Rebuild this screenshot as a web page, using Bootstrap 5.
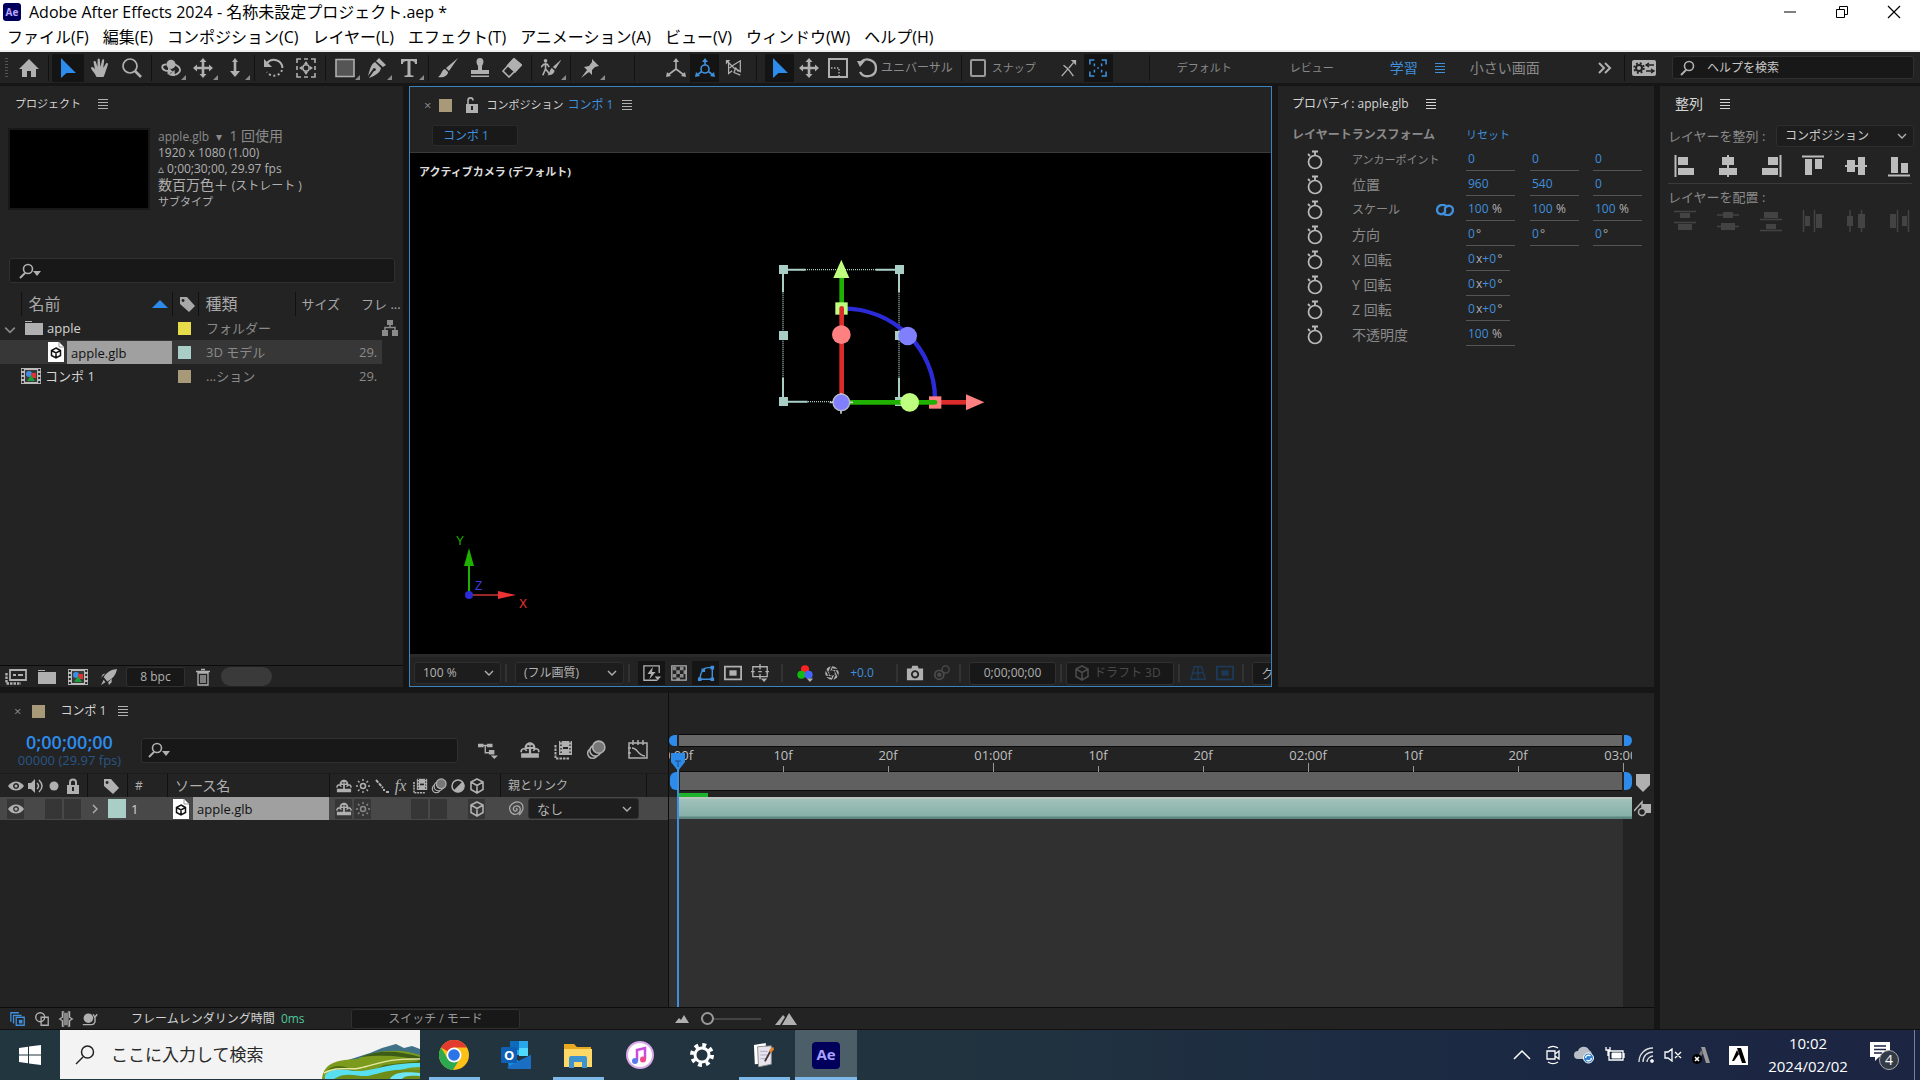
<!DOCTYPE html>
<html lang="ja">
<head>
<meta charset="utf-8">
<meta name="viewport" content="width=device-width, initial-scale=1">
<title>Adobe After Effects 2024</title>
<link href="https://cdn.jsdelivr.net/npm/bootstrap@5.3.0/dist/css/bootstrap.min.css" rel="stylesheet">
<style>
:root{--pane:#232323;--gap:#161616;--well:#181818;--txt:#b0b0b0;--dim:#8a8a8a;--hot:#3f8fdc;--edge:#303030}
body{font:12px/16px "Open Sans","Noto Sans CJK JP",sans-serif;color:var(--txt);background:var(--gap);min-height:100vh;overflow:hidden}
button,input,select{font:inherit;color:inherit}
a{color:inherit;text-decoration:none}
.f11{font-size:11px}.f12{font-size:12px}.f13{font-size:13px}.f14{font-size:14px}.f16{font-size:16px}
.hot,.tool.hot,.vb.hot,.tfb.hot{color:var(--hot)}.dim{color:var(--dim)}.lite{color:#d4d4d4}
.ic{width:20px;height:20px;flex:none;fill:none;stroke:currentColor;stroke-width:2;overflow:visible}
.ic10{width:10px;height:10px}.ic12{width:12px;height:12px;vertical-align:middle}.ic16{width:16px;height:16px}.ic18{width:18px;height:18px}.ic24{width:24px;height:24px}
.icw{width:22px;height:16px}.icset{width:24px;height:16px}.icfile{width:16px}.icsrch{height:16px}.iclink{width:18px;height:12px}
.flipx{transform:scaleX(-1)}.flipy{transform:scaleY(-1)}.turn{transform:rotate(90deg)}.unturn{transform:rotate(-90deg)}
.ib{background:none;border:0;padding:0;display:inline-flex;align-items:center;justify-content:center;flex:none;position:relative}
.pane{background:var(--pane);min-width:0;min-height:0;overflow:hidden}
/* window chrome */
.titlebar{height:24px;background:#fff;color:#000;font-size:16px;padding-left:3px}
.winbtn{width:52px;height:24px;color:#000}
.menus{height:28px;background:#fff;color:#000;border-bottom:2px solid #eee;font-size:16px;padding-left:7px;gap:14px}
.aelogo{width:18px;height:18px;border-radius:3px;background:#00005b;color:#b9a6ff;font-size:10px;line-height:18px;font-weight:700;text-align:center}
/* tool strip */
.tools{height:31px;background:var(--pane)}
.tool{width:32px;height:28px;color:#b0b0b0}
.tool.mini{width:29px}
.tool.on{background:#141414;color:var(--hot)}
.more::after{content:"";position:absolute;right:1px;bottom:2px;border-left:5px solid transparent;border-bottom:5px solid #8a8a8a}
.bar{width:1px;height:26px;background:#121212;margin:0 3px;flex:none}
.bar.axbar{margin:0 26px 0 28px}
.bar.wsbar{margin:0 27px 0 36px}
.grip{width:3px;height:20px;margin:0 5px;background:repeating-linear-gradient(#555 0 1px,transparent 1px 3px)}
.ws{color:var(--dim)}
.snapbox{appearance:none;width:16px;height:18px;border:2px solid #999;border-radius:2px}
.snaptext{margin-left:2px}
.wsnav>a:nth-child(2){margin-left:58px}.wsnav>a:nth-child(3){margin-left:56px}.wsnav>a:nth-child(4){margin-left:24px}
.hsearch{width:242px;height:23px;margin:0 6px 0 12px;padding-left:6px}
.field{background:var(--well);border:1px solid var(--edge);border-radius:3px}
.field input{background:none;border:0;outline:0;padding:0;min-width:0;width:100%}
.field input::placeholder{color:#c8c8c8;opacity:1}
.drop{width:8px;height:5px;fill:#b0b0b0;margin:6px 0 0 -5px;flex:none}
/* panels */
.workarea{display:grid;grid-template-columns:minmax(0,403fr) minmax(0,863fr) minmax(0,376fr) minmax(0,260fr);grid-template-rows:minmax(0,601fr) minmax(0,336fr);gap:6px;margin-top:3px;flex:1 1 0;min-height:0}
.phead{height:36px;flex:none;padding-left:15px}
.phead.inner{padding-left:14px}
.swatch{display:inline-block;width:13px;height:13px;flex:none}
.tan{background:#a89a78}.mint{background:#a8cec6}.yel{background:#e6dc4a}
.selbox{position:relative;display:inline-flex}
.selbox svg{position:absolute;right:7px;top:6px;pointer-events:none}
.fsel{appearance:none;background:#1d1d1d;border:1px solid #2e2e2e;border-radius:3px;height:22px;padding:0 8px;outline:0;color:#b4b4b4}
/* project */
.thumb{width:142px;height:82px;background:#000;border:2px solid #181818;flex:none}
.pinfo{padding:6px 0 0 8px}
.psearch{height:25px;margin:48px 8px 9px 9px;padding-left:8px}
.ptable{table-layout:fixed;width:100%;border-collapse:collapse;color:var(--dim);line-height:20px}
.ptable th{font-weight:400;font-size:16px;height:24px;padding:0 0 0 7px;border-left:1px solid #111;color:#a8a8a8;white-space:nowrap;overflow:hidden}
.ptable th.small13{font-size:13px;padding-left:6px}
.ptable th:first-child,.ptable th:last-child{border:0}
.ptable td{height:24px;padding:0 0 0 8px;white-space:nowrap;overflow:hidden;font-size:13px}
.ptable .sw{padding-left:6px}
.ptable tr.sel td:not(:last-child){background:#373737}
.cw21{width:21px}.cw26{width:26px}.cw97{width:97px}.cw60{width:60px}.cw27{width:27px}
.nm{padding-left:27px;gap:3px}
.pick{background:#a0a0a0;color:#111;height:23px;line-height:24px}
.pfoot{height:22px;border-top:1px solid #0c0c0c;flex:none;color:#b0b0b0}
.pbtn{width:31px;height:20px}
.pbtn.bin{margin-left:-6px}
.bpc{width:59px;height:20px;margin:0 2px}
.pill{width:51px;height:19px;border-radius:10px;background:#3a3a3a;margin-left:3px}
/* viewer */
.viewer{border:1px solid #3f83bd}
.vlock{margin:0 6px 0 12px}
.vtabs{height:29px;padding:2px 0 0 22px;flex:none}
.ctab{width:86px;height:21px;background:#191919;border:1px solid #2a2a2a;border-radius:2px;justify-content:flex-start;padding-left:10px}
.stage{background:#000;position:relative;flex:1 1 0;border-top:1px solid #3a3a3a}
.cam{padding:11px 0 0 9px;font-size:11px;font-weight:700;color:#dedede}
.gizmo{position:absolute;left:331px;top:86px;width:280px;height:190px}
.axes{position:absolute;left:43px;bottom:41px;width:80px;height:80px}
.vfoot{height:32px;flex:none;border-top:3px solid #2a2a2a;padding:3px 0 0 4px;overflow:hidden}
.vfoot .bar{background:#333;height:18px;width:2px}
.vb{width:27px;height:24px;color:#b0b0b0}
.vb.on{background:#151515}
.vb.off,.off{color:#4a4a4a}.vb.offb{color:#1c3a58}
.zoomsel{width:87px}.ressel{width:109px}
.exp{width:34px;margin-right:14px}
.tcb{width:87px;height:23px;margin-left:4px}
.draft{width:108px;height:23px;justify-content:flex-start;padding-left:7px}
.qbox{width:60px;height:23px;justify-content:flex-start;padding-left:8px;margin-left:4px}
/* properties */
.prow{height:25px;display:grid;grid-template-columns:60px 84px 30px 64px 63px 63px;padding-left:14px;align-items:center;white-space:nowrap}
.prow .wide{grid-column:1/4}
.watch{width:16px;margin-left:15px;color:#bbb}
.val{width:49px;height:22px;border-bottom:1px solid #555;display:flex;align-items:center;padding-left:2px}
.val.rot{width:44px}
.val input{background:none;border:0;outline:0;padding:0;color:var(--hot);width:8px;min-width:0}
.val input.n2{width:15px}.val input.n3{width:24px}
/* align */
.alrow{height:28px;margin-right:-2px}
.alignsel{width:138px;color:#ccc}
.algrid{display:grid;grid-template-columns:repeat(6,1fr);justify-items:center;margin:0 -8px 0 -4px}
.albtn{height:32px;color:#bcbcbc}
.alsep{height:1px;background:#3a3a3a;margin-top:1px}
.distlabel{padding-top:5px;height:25px}
.dis{color:#434343}
/* timeline */
.tl{grid-column:1/4}
.tlleft{width:668px;flex:none}
.tlhead{gap:3px}
.tltop{height:44px;padding-bottom:2px}
.tcw{width:139px;margin-right:2px}
.sub{color:#285684}
.timecode{color:#2d8ceb;font-size:18px;line-height:20px;font-weight:600}
.tlsearch{width:317px;height:25px;padding-left:5px}
.tlb{width:33px;height:24px;color:#b0b0b0}
.tlb.first{margin:0 9px 0 13px}.tlb.last{margin-left:9px}
.trow{display:grid;grid-template-columns:87px 40px 40px minmax(0,1fr) 171px 146px 22px;align-items:stretch}
.trow>div{display:flex;align-items:center;min-width:0}
.trow.heads{height:24px;color:#b0b0b0;border-top:1px solid #1c1c1c}
.trow.heads>div+div{box-shadow:inset 1px 0 #111}
.trow.layer{height:23px;background:#484848}
.trow .avcol{padding-left:6px}.trow .swcol{padding-left:5px}
.trow .srccol{padding-left:6px;gap:4px}
.cell{width:19px;height:20px;display:inline-flex;align-items:center;justify-content:center;flex:none}
.cell.k{background:#363636;background-clip:content-box;padding:0 1px}
.fxs{font-family:"Liberation Serif",serif}
.lsw{width:18px;height:19px;margin-right:1px;flex:none}
.psel{width:111px;height:21px;background:#1e1e1e}
.tracks{flex:1 1 0;min-width:0;position:relative;border-left:1px solid #0d0d0d}
.hnd{background:#2d8ceb;width:8px;flex:none}
.hnd.l{border-radius:6px 0 0 6px}.hnd.r{border-radius:0 6px 6px 0}
.rowbars{display:flex;gap:2px}
.rowbars .mid{flex:1 1 0;background:#686868;box-shadow:0 1px #0b0b0b,0 -1px #0b0b0b}
.nav1{height:11px;margin-top:42px}
.nav2{height:18px;padding-left:1px}
.nav2 .mid{background:#606060}
.ruler{height:26px;position:relative;overflow:hidden;font-size:13px;line-height:19px;color:#c0c0c0}
.ruler .in{position:absolute;left:9px;right:8px;top:0;bottom:0}
.tick{position:absolute;bottom:0;width:60px;margin-left:-30px;height:26px;text-align:center}
.tick::after{content:"";position:absolute;left:30px;bottom:0;width:1px;height:6px;background:#999}
.tick.s::after{height:9px}
.cache{height:7px;padding:3px 0 0 9px}.cache i{display:block;width:30px;height:4px;background:#1db32c}
.cliprow{height:22px;background:#484848}
.clip{height:22px;margin-left:9px;background:linear-gradient(#bcc4c2 0 2px,#a0c2bb 2px,#86b0a8 19px,#5f8780 20px)}
.void{flex:1 1 0;background:#303030;margin:0 9px 0 0}
.playhead{position:absolute;left:2px;top:60px;bottom:0;width:15px}
.playhead::after{content:"";position:absolute;left:6px;top:14px;bottom:0;width:2px;background:#3f8fdc}
.gutter{width:22px;flex:none;padding-top:81px;color:#b0b0b0}
.tfoot{height:22px;flex:none;border-top:1px solid #0c0c0c;padding-left:6px}
.tfb{width:24px;height:20px;color:#b0b0b0}
.rt{width:220px;margin-left:29px;white-space:nowrap}
.ms{color:#4ec79a}
.swm{width:169px;height:20px;margin-right:155px;color:#999}
.zoomer{width:60px;height:12px;appearance:none;background:linear-gradient(#444,#444) center/100% 2px no-repeat;margin:0 14px 0 12px}
.zoomer::-webkit-slider-thumb{appearance:none;width:13px;height:13px;border-radius:50%;border:2px solid #999;background:#232323}
.mt1{width:14px;height:8px}.mt2{width:22px;height:12px}
/* task bar */
.taskbar{height:51px;border-top:1px solid #111;background:linear-gradient(90deg,#22363f 0,#21333f 50%,#1b2843 80%,#1c2542 100%);color:#fff}
.start{width:60px}
.tsearch{width:360px;height:49px;background:#f3f3f3;color:#222;font-size:17px;overflow:hidden}
.tsearch .glass{margin:0 16px 0 15px;stroke-width:1.5}
.tsearch input{border:0;background:none;outline:0;width:209px;padding:0}
.tsearch input::placeholder{color:#2a2a2a;opacity:1}
.apps{margin-left:3px}
.app{width:62px;height:50px}
.app.run::after{content:"";position:absolute;left:6px;right:5px;bottom:0;height:3px;background:#7db8e8}
.app.cur{background:#4c5e68}
.app.cur::after{left:0;right:0}
.tray{width:31px;height:50px}
.tray.narrow{width:25px}.tray.ime{width:42px}
.aebig{width:28px;height:27px;border-radius:4px;background:#00005b;color:#a9a0ff;font-weight:700;font-size:15px;line-height:25px}
.clock{width:98px;font-size:15px;line-height:23px;text-align:center}
.note{width:54px;margin:0 5px 0 4px;padding-right:8px;border-right:1px solid #7a8294}
</style>
<script src="https://cdn.jsdelivr.net/npm/bootstrap@5.3.0/dist/js/bootstrap.bundle.min.js"></script>
</head>
<body class="d-flex flex-column">
<svg width="0" height="0" class="position-absolute" aria-hidden="true"><defs>
<symbol id="home" viewBox="0 0 20 20"><path d="M0 11 10 1l10 10h-3v8h-5v-6H8v6H3v-8z" fill="currentColor" stroke="none"/></symbol>
<symbol id="arrow" viewBox="0 0 20 20"><path d="M3 0v20l5.500-5H18z" fill="#2d8ceb" stroke="none"/></symbol>
<symbol id="hand" viewBox="0 0 20 20"><path d="M6 18C5 15 1 12 1 9.500c1-1.200 3-.2 4 2L3.500 4c0-1.500 2-1.500 2.400 0L7.500 9 7.600 1.500c.2-1.500 2-1.500 2.200 0L10.400 9l1.700-7c.5-1.300 2.200-1 2.100.5L13.200 10l2.800-4.500c.9-1 2.300-.2 1.900 1C16.500 11 15 16 13.500 19h-7z" fill="currentColor" stroke="none"/></symbol>
<symbol id="mag" viewBox="0 0 20 20"><circle cx="8" cy="8" r="7" stroke-width="1.700"/><path d="m13 13 6 6" stroke-width="2.600"/></symbol>
<symbol id="srch" viewBox="0 0 20 16"><circle cx="10" cy="6" r="4.500" stroke-width="1.600"/><path d="m7 10-5 5" stroke-width="2"/></symbol>
<symbol id="orbit" viewBox="0 0 22 20"><circle cx="11" cy="6" r="5" fill="currentColor" stroke="none"/><path d="M6 6C0 6 0 11 5 13l4 .5M15 6c7 3 8 8 2 11-4 1-7 0-9-1" stroke-width="2"/><path d="m8 9 5 5-6 3zM15 12v7l-6-1z" fill="currentColor" stroke="none"/></symbol>
<symbol id="pan" viewBox="0 0 20 20"><path d="M10 2v16M2 10h16" stroke-width="2.600"/><path d="m10 0 3.500 4h-7zM10 20l3.500-4h-7zM0 10l4-3.500v7zM20 10l-4-3.500v7z" fill="currentColor" stroke="none"/></symbol>
<symbol id="dolly" viewBox="0 0 20 20"><path d="M10 3v11" stroke-width="2.600"/><path d="m10 0 3 4H7zM10 19l5-6H5z" fill="currentColor" stroke="none"/></symbol>
<symbol id="rot" viewBox="0 0 20 20"><path d="M3 5C8-1 18 2 18.500 10" /><path d="M18 12A8.500 8.500 0 0 1 3 14" stroke-dasharray="2 2.500"/><path d="M0 1v8h8z" fill="currentColor" stroke="none"/></symbol>
<symbol id="anchor" viewBox="0 0 20 20"><path d="M1 5V1h4M15 1h4v4M19 15v4h-4M5 19H1v-4M8 1h4M8 19h4M1 8v4M19 8v4" stroke-width="1.600"/><circle cx="10" cy="10" r="3.200" stroke-width="1.500"/><path d="m10 3 2 3H8zM10 17l2-3H8zM3 10l3-2v4zM17 10l-3-2v4z" fill="currentColor" stroke="none"/></symbol>
<symbol id="rect" viewBox="0 0 20 20"><path d="M1 1.500h18v17H1z" fill="#555" stroke-width="1.600"/></symbol>
<symbol id="pen" viewBox="0 0 20 20"><path d="m12 0 7 7-3 2-7-6zM8 4l6 6c-1 5-5 7-12 10l5-7 1 0a1.500 1.500 0 1 0-2-2l-5 7C3 11 4 6 8 4" fill="currentColor" stroke="none"/></symbol>
<symbol id="type" viewBox="0 0 20 20"><path d="M2 1h16v5h-2c0-2-1-3-4.500-3v13c0 1 .5 1.500 3 1.500V19h-9v-1.500c2.500 0 3-.5 3-1.500V3C5 3 4 4 4 6H2z" fill="currentColor" stroke="none"/></symbol>
<symbol id="brush" viewBox="0 0 20 20"><path d="M20 0 11 13 8 10zM7 11l3 3c0 4-5 6-10 5 4-2 3-7 7-8" fill="currentColor" stroke="none"/></symbol>
<symbol id="stamp" viewBox="0 0 20 20"><path d="M8 8C5 3 7 0 10 0s5 3 2 8v4h7v4H1v-4h7zM1 17.500h18V19H1z" fill="currentColor" stroke="none"/></symbol>
<symbol id="eraser" viewBox="0 0 20 20"><path d="M12 1 1 13l6 6L19 7z" stroke-width="1.600"/><path d="m12 1-6 6.500 7 6L19 7z" fill="currentColor"/></symbol>
<symbol id="roto" viewBox="0 0 22 20"><circle cx="5" cy="2" r="2" fill="currentColor" stroke="none"/><path d="M5 4v7l-3 7M5 11l4 5M0 9l3-3h4l2 3" stroke-width="1.800"/><path d="M23 0 16 11l-3-2zM12 10l3 3c-1 4-4 5-8 5 3-2 2-6 5-8" fill="currentColor" stroke="none"/></symbol>
<symbol id="pin" viewBox="0 0 20 20"><path d="m12 1 7 7-4 1-3 3v5L4 9l5-1 3-4zM7 12l2 2-8 6z" fill="currentColor" stroke="none"/></symbol>
<symbol id="ax" viewBox="0 0 20 20"><path d="M10 3v8l-8 6M10 11l8 6" stroke-width="1.600"/><path d="m10 0 3 4H7zM0 19l1-5 4 4zM20 19l-1-5-4 4z" fill="currentColor" stroke="none"/></symbol>
<symbol id="axw" viewBox="0 0 20 20"><use href="#ax"/><circle cx="10" cy="11" r="4" fill="#141414" stroke-width="1.600"/></symbol>
<symbol id="axv" viewBox="0 0 20 20"><path d="M4 4v12l4-3M9 7l8-5v12l-3-2M3 3l9 9M17 18l-7-3 2-5 3 4M5 10l4-3" stroke-width="1.400"/><path d="M1 1h5L1 6z" fill="currentColor" stroke="none"/></symbol>
<symbol id="scale" viewBox="0 0 20 20"><path d="M1 1h18v18H1z"/><path d="M3 10h8v8" stroke-width="1.500" stroke-dasharray="1.500 1.500"/></symbol>
<symbol id="undo" viewBox="0 0 20 20"><path d="M4 4c5-5 15-2 15 6 0 9-12 11-16 4" stroke-width="2.300"/><path d="M0 3h8L3 9z" fill="currentColor" stroke="none"/></symbol>
<symbol id="snap1" viewBox="0 0 20 20"><path d="m3 19 7-8 6 8M5 7l5 4M11 10l5-6" stroke-width="1.500" /><path d="M13 1h6v6z" fill="currentColor" stroke="none"/></symbol>
<symbol id="snap2" viewBox="0 0 20 20"><path d="M1 6V1h5M14 1h5v5M19 14v5h-5M6 19H1v-5M6 5v3M14 5v3M6 12v3M14 12v3M9 10h2" stroke-width="1.700"/></symbol>
<symbol id="ham" viewBox="0 0 12 12"><path d="M1 1.500h10M1 4.500h10M1 7.500h10M1 10.500h10" stroke-width="1.100"/></symbol>
<symbol id="wsset" viewBox="0 0 24 16"><rect width="24" height="16" rx="2" fill="currentColor" stroke="none"/><circle cx="7" cy="8" r="3" stroke="#222"/><circle cx="7" cy="8" r="4.800" stroke="#222" stroke-width="1.800" stroke-dasharray="1.900 1.900"/><path d="M14 5h8M14 11h8M17 3l-3 2 3 2M19 9l3 2-3 2" stroke="#222" stroke-width="1.400"/></symbol>
<symbol id="chev" viewBox="0 0 10 10"><path d="m1 3 4 4 4-4" stroke-width="1.400"/></symbol>
<symbol id="tag" viewBox="0 0 16 16"><path fill-rule="evenodd" d="M1 1h7l8 9-6 6-9-8zM4 3a1.500 1.500 0 1 0 .1 0" fill="currentColor" stroke="none"/></symbol>
<symbol id="fold" viewBox="0 0 18 16"><path d="M0 1h7v1H0zM0 3h18v12H0z" fill="#b0b0b0" stroke="none"/></symbol>
<symbol id="file3d" viewBox="0 0 16 20"><path d="M0 0h11l5 5v15H0z" fill="#fff" stroke="none"/><path d="M11 0v5h5" stroke="#999" stroke-width="1"/><path d="m8 6 4.500 2.500v5L8 16l-4.500-2.500v-5zM3.500 8.500 8 11l4.500-2.500M8 11v5" stroke="#111" stroke-width="1.500"/></symbol>
<symbol id="comp" viewBox="0 0 20 16"><rect width="20" height="16" fill="#bbb" stroke="none"/><path d="M1.800 1v15M18.200 1v15" stroke="#222" stroke-dasharray="2 2"/><rect x="4" y="2" width="12" height="12" fill="#3a3a3a" stroke="none"/><circle cx="8" cy="6" r="3" fill="#3a8ee6" stroke="none"/><rect x="10" y="5" width="5" height="5" fill="#d33" stroke="none"/><path d="m10 7 4 6H6z" fill="#1aa03a" stroke="none"/></symbol>
<symbol id="tree" viewBox="0 0 16 16"><path d="M5 0h6v5H5zM0 10h6v6H0zM10 10h6v6h-6z" fill="currentColor" stroke="none"/><path d="M8 5v3M3 11V7.500h10V11" stroke-width="1.500"/></symbol>
<symbol id="interp" viewBox="0 0 22 16"><path d="M5 1h16v10H5zM8 6h3M13 6h5" stroke-width="1.800"/><path d="M1.500 4v10.500H16" stroke-dasharray="2.500 1" stroke-width="2.400"/></symbol>
<symbol id="rocket" viewBox="0 0 18 18"><path d="M18 0C9 1 6 5 3 9l4 5c5-3 9-5 11-14M1 9l4-4-3 1-2 4zM8 15l4-4v4l-3 3zM3 12l-3 6 5-3z" fill="currentColor" stroke="none"/></symbol>
<symbol id="trash" viewBox="0 0 16 18"><path d="M3 5h10v12H3zM1 3.500h14M6 1.500h4M6 7v8M8 7v8M10 7v8" stroke-width="1.300"/></symbol>
<symbol id="lock" viewBox="0 0 14 16"><path d="M4 8V4.500c0-4 6-4 6 0V8" /><path fill-rule="evenodd" d="M1 7h12v9H1zm5 2v4h2V9z" fill="currentColor" stroke="none"/></symbol>
<symbol id="unlock" viewBox="0 0 14 16"><path d="M3 8V3.500C3 0 8 0 8 3.500" stroke-width="1.600"/><path fill-rule="evenodd" d="M1 7h12v9H1zm5 2v4h2V9z" fill="currentColor" stroke="none"/></symbol>
<symbol id="flash" viewBox="0 0 20 20"><path d="M16 18H1V2h17v8" stroke-width="1.500"/><path d="m11 3-6 8h4l-2 6 7-8h-4zM13 14h7l-3.500 4z" fill="currentColor" stroke="none"/></symbol>
<symbol id="check" viewBox="0 0 20 20"><path d="M2 2h16v16H2z" stroke-width="1.400"/><path d="M3 3h4v4H3zM11 3h4v4h-4zM7 7h4v4H7zM15 7h3v4h-3zM3 11h4v4H3zM11 11h4v4h-4zM7 15h4v3H7z" fill="currentColor" stroke="none" opacity=".75"/></symbol>
<symbol id="mask" viewBox="0 0 20 20"><path d="M3 17h14V4h-5C6 4 4 9 3 17" stroke-width="1.600"/><path d="M1 15h4v4H1zM15 15h4v4h-4zM15 2h4v4h-4zM5 5h4v4H5z" fill="currentColor" stroke="none"/></symbol>
<symbol id="roi" viewBox="0 0 20 20"><path d="M1 3h18v14H1z"/><path d="M6 7h8v6H6z" fill="currentColor" stroke="none"/></symbol>
<symbol id="guide" viewBox="0 0 20 20"><path d="M2 3h16v11H2zM10 0v6M10 11v6M-1 8.500h5M16 8.500h5M8 8.500h4" stroke-width="1.500"/><path d="M11 16h7l-3.500 4z" fill="currentColor" stroke="none"/></symbol>
<symbol id="rgb" viewBox="0 0 20 20"><g stroke="none"><circle cx="10" cy="6" r="4.500" fill="#f22"/><circle cx="6" cy="12" r="4.500" fill="#1b1"/><circle cx="14" cy="12" r="4.500" fill="#46f"/><path d="M12 16h7l-3.500 4z" fill="currentColor"/></g></symbol>
<symbol id="aper" viewBox="0 0 20 20"><circle cx="10" cy="10" r="6" stroke-width="5"/><path d="M10 0 6 9M19 6l-9-1M18 15l-4-8M10 20l4-8M1 14l9 1M2 5l4 8" stroke="#232323" stroke-width="1.600"/></symbol>
<symbol id="cam" viewBox="0 0 20 20"><path fill-rule="evenodd" d="M1 5h5l1-3h6l1 3h5v13H1zm9 2a4.500 4.500 0 1 0 .1 0m0 2a2.500 2.500 0 1 1-.1 0" fill="currentColor" stroke="none"/></symbol>
<symbol id="snapsh" viewBox="0 0 20 20"><circle cx="7" cy="12" r="5"/><circle cx="14" cy="6" r="4" stroke-width="1.500"/><circle cx="7" cy="12" r="1.500" fill="currentColor"/></symbol>
<symbol id="cube" viewBox="0 0 16 16"><path d="m8 1 6 3v7.500L8 15l-6-3.500V4zM2 4l6 3.500L14 4M8 7.500V15" stroke-width="1.600"/></symbol>
<symbol id="grid3" viewBox="0 0 20 20"><path d="M6 3h8l4 14H2zM4 10h12M10 3v14" stroke-width="1.600"/></symbol>
<symbol id="watch" viewBox="0 0 16 20"><circle cx="8" cy="12" r="6.500" stroke-width="1.700"/><path d="M5 1.500h6M8 2v4M1 4l2 2" stroke-width="1.800"/></symbol>
<symbol id="link" viewBox="0 0 18 12"><path d="M10 2C6-1 1 2 1 6s5 6 8 2V5M8 10c4 3 9 0 9-4s-5-6-8-2v3" stroke-width="2.300"/></symbol>
<symbol id="alL" viewBox="0 0 24 24"><path d="M2.500 1v22"/><path d="M5 3h10v8H5zM5 14h16v7H5z" fill="currentColor" stroke="none"/></symbol>
<symbol id="alT" viewBox="0 0 24 24"><path d="M1 2.500h22"/><path d="M4 5h7v16H4zM14 5h7v10h-7z" fill="currentColor" stroke="none"/></symbol>
<symbol id="alC" viewBox="0 0 24 24"><path d="M12 1v22"/><path d="M6 3h12v8H6zM3 14h18v7H3z" fill="currentColor" stroke="none"/></symbol>
<symbol id="dT" viewBox="0 0 24 24"><path d="M1 2.500h22M1 13.500h22" stroke-width="1.500"/><path d="M7 4h10v5H7zM5 15h14v6H5z" fill="currentColor" stroke="none"/></symbol>
<symbol id="dC" viewBox="0 0 24 24"><path d="M1 6h22M1 17.500h22" stroke-width="1.500"/><path d="M7 3h10v6H7zM5 14h14v7H5z" fill="currentColor" stroke="none"/></symbol>
<symbol id="eye" viewBox="0 0 16 16"><path fill-rule="evenodd" d="M0 8C4 2 12 2 16 8 12 14 4 14 0 8m8-3a3 3 0 1 0 .1 0" fill="currentColor" stroke="none"/><circle cx="8" cy="8" r="1.500" fill="currentColor" stroke="none"/></symbol>
<symbol id="spk" viewBox="0 0 16 16"><path d="M1 5h3l4-4v14l-4-4H1z" fill="currentColor" stroke="none"/><path d="M10 5c2 2 2 4 0 6M12 2c4 4 4 8 0 12" stroke-width="1.500"/></symbol>
<symbol id="dot" viewBox="0 0 16 16"><circle cx="8" cy="8" r="4.500" fill="currentColor" stroke="none"/></symbol>
<symbol id="shy" viewBox="0 0 18 18"><path d="M4 8c0-8 10-8 10 0zM8 8h2v6H8zM1 12h16v4H1z" fill="currentColor" stroke="none"/><path d="M1 11c0-4 4-4 5-1M17 11c0-4-4-4-5-1" stroke-width="1.500"/><path d="M6.500 5.500h2M9.500 5.500h2" stroke="#232323" stroke-width="1.600"/></symbol>
<symbol id="sun" viewBox="0 0 16 16"><circle cx="8" cy="8" r="2.500" stroke-width="1.500"/><path d="M8 1v2M8 13v2M1 8h2M13 8h2M3 3l1.500 1.500M11.500 11.500 13 13M13 3l-1.500 1.500M4.500 11.500 3 13" stroke-width="1.400"/></symbol>
<symbol id="qual" viewBox="0 0 16 16"><path d="m2 2 7 8M9 12h2M12 14h3" stroke-dasharray="3.500 1" /></symbol>
<symbol id="film" viewBox="0 0 20 20"><path d="M6 1h13v14H6z" fill="currentColor" stroke="none"/><path d="M8 1v14M17 1v14" stroke="#232323" stroke-width="1.400" stroke-dasharray="1.500 2"/><path d="M10 8h5" stroke="#232323"/><path d="M2.500 5v13.500H16" stroke-dasharray="2.500 1"/></symbol>
<symbol id="blur" viewBox="0 0 18 18"><circle cx="6" cy="12" r="4.500" stroke-width="1.400"/><circle cx="8.500" cy="9.500" r="5" fill="#232323" stroke-width="1.400"/><circle cx="11.500" cy="6.500" r="5.500" fill="#777" stroke-width="1.400"/></symbol>
<symbol id="half" viewBox="0 0 16 16"><circle cx="8" cy="8" r="6" stroke-width="1.500"/><path d="M12.500 3.500a6 6 0 1 1-9 9z" fill="currentColor" stroke="none"/></symbol>
<symbol id="flow" viewBox="0 0 22 20"><path d="M0 3h6v4H0zM10 3h6v4h-6zM12 10h6v5h-6zM14 16h8l-4 4z" fill="currentColor" stroke="none"/><path d="M5 5h6M8 5v8h5" stroke-width="1.500"/></symbol>
<symbol id="graph" viewBox="0 0 20 20"><path d="M1 3h18v15H1zM5 0v5M10 0v5M15 0v5M0 8h3M0 13h3M4 8c6 0 5 7 13 8" stroke-width="1.500"/></symbol>
<symbol id="spiral" viewBox="0 0 16 16"><path d="M8 8c1-1 2 1 0 2-3 1-4-4 0-5 5-1 6 6 1 8C3 15-1 7 4 3s11-2 11 4c0 3-2 5-4 7" stroke-width="1.200"/></symbol>
<symbol id="marker" viewBox="0 0 14 18"><path d="M0 0h14v11l-7 7-7-7z" fill="currentColor" stroke="none"/></symbol>
<symbol id="shot" viewBox="0 0 18 16"><path d="M8 3h9v9H8z" fill="currentColor" stroke="none"/><path d="M0 10 8 1v8" stroke-width="1.500"/><circle cx="8" cy="11" r="3.500" fill="#232323" stroke-width="1.600"/></symbol>
<symbol id="mtn" viewBox="0 0 22 12"><path d="M0 12 8 2l2 2-5 8zM7 12l7-12 8 12z" fill="currentColor" stroke="none"/></symbol>
<symbol id="mtns" viewBox="0 0 14 8"><path d="m0 8 4-5 2 2 3-5 5 8z" fill="currentColor" stroke="none"/></symbol>
<symbol id="lays" viewBox="0 0 18 18"><path d="M1 12V2h9M4 14V5h9M7 7h9v9H7z" stroke-width="1.500"/><path d="M10 10h4v4h-4z" fill="currentColor" stroke="none"/></symbol>
<symbol id="circs" viewBox="0 0 18 18"><circle cx="7" cy="7" r="5" stroke-width="1.600"/><path d="M8 7h8v9H8z" stroke-width="1.500"/></symbol>
<symbol id="brace" viewBox="0 0 18 18"><path d="M7 1H5v6l-3 2 3 2v6h2M11 1h2v6l3 2-3 2v6h-2" stroke-width="1.500"/><path d="M6 2h6v14H6z" fill="currentColor" stroke="none" opacity=".7"/></symbol>
<symbol id="snail" viewBox="0 0 20 18"><circle cx="8" cy="8" r="6" fill="currentColor" stroke="none"/><path d="M1 16h11c4 0 5-4 4-9M14 3l2 4 3-4" stroke-width="1.800"/></symbol>
</defs></svg>

<header class="flex-shrink-0">
<div class="titlebar d-flex align-items-center">
 <span class="aelogo me-2">Ae</span><span class="flex-grow-1 ms-n1">Adobe After Effects 2024 - 名称未設定プロジェクト.aep *</span>
 <button class="ib winbtn" aria-label="最小化"><svg class="ic ic16" viewBox="0 0 16 16"><path d="M2 8h12" stroke-width="1"/></svg></button>
 <button class="ib winbtn" aria-label="元に戻す"><svg class="ic ic16" viewBox="0 0 16 16"><path d="M2.500 5.500h8v8h-8zM5.500 5V2.500h8v8H11" stroke-width="1"/></svg></button>
 <button class="ib winbtn" aria-label="閉じる"><svg class="ic ic16" viewBox="0 0 16 16"><path d="m2 2 12 12M14 2 2 14" stroke-width="1.200"/></svg></button>
</div>
<nav class="menus d-flex align-items-center">
 <a href="#">ファイル(F)</a><a href="#">編集(E)</a><a href="#">コンポジション(C)</a><a href="#">レイヤー(L)</a><a href="#">エフェクト(T)</a><a href="#">アニメーション(A)</a><a href="#">ビュー(V)</a><a href="#">ウィンドウ(W)</a><a href="#">ヘルプ(H)</a>
</nav>
<div class="tools d-flex align-items-center">
 <span class="grip"></span>
 <button class="ib tool" aria-label="ホーム"><svg class="ic"><use href="#home"/></svg></button><span class="bar"></span>
 <button class="ib tool on" aria-label="選択"><svg class="ic"><use href="#arrow"/></svg></button><button class="ib tool" aria-label="手のひら"><svg class="ic"><use href="#hand"/></svg></button><button class="ib tool" aria-label="ズーム"><svg class="ic"><use href="#mag"/></svg></button><span class="bar"></span>
 <button class="ib tool more" aria-label="周回"><svg class="ic"><use href="#orbit"/></svg></button><button class="ib tool more" aria-label="パン"><svg class="ic"><use href="#pan"/></svg></button><button class="ib tool more" aria-label="ドリー"><svg class="ic"><use href="#dolly"/></svg></button><span class="bar"></span>
 <button class="ib tool" aria-label="回転"><svg class="ic"><use href="#rot"/></svg></button><button class="ib tool" aria-label="アンカー"><svg class="ic"><use href="#anchor"/></svg></button><span class="bar"></span>
 <button class="ib tool more" aria-label="長方形"><svg class="ic"><use href="#rect"/></svg></button><button class="ib tool more" aria-label="ペン"><svg class="ic"><use href="#pen"/></svg></button><button class="ib tool more" aria-label="文字"><svg class="ic"><use href="#type"/></svg></button><span class="bar"></span>
 <button class="ib tool" aria-label="ブラシ"><svg class="ic"><use href="#brush"/></svg></button><button class="ib tool" aria-label="スタンプ"><svg class="ic"><use href="#stamp"/></svg></button><button class="ib tool" aria-label="消しゴム"><svg class="ic"><use href="#eraser"/></svg></button><span class="bar"></span>
 <button class="ib tool more" aria-label="ロトブラシ"><svg class="ic"><use href="#roto"/></svg></button><span class="bar"></span>
 <button class="ib tool more" aria-label="ピン"><svg class="ic"><use href="#pin"/></svg></button>
 <span class="bar axbar"></span>
 <button class="ib tool mini" aria-label="ローカル軸"><svg class="ic"><use href="#ax"/></svg></button><button class="ib tool mini on" aria-label="ワールド軸"><svg class="ic"><use href="#axw"/></svg></button><button class="ib tool mini" aria-label="ビュー軸"><svg class="ic ic18"><use href="#axv"/></svg></button><span class="bar mx-2"></span>
 <button class="ib tool mini on" aria-label="ユニバーサル"><svg class="ic"><use href="#arrow"/></svg></button><button class="ib tool mini" aria-label="位置"><svg class="ic"><use href="#pan"/></svg></button><button class="ib tool mini" aria-label="スケール"><svg class="ic"><use href="#scale"/></svg></button><button class="ib tool mini" aria-label="回転"><svg class="ic"><use href="#undo"/></svg></button>
 <span class="dim f12">ユニバーサル</span><span class="bar mx-2"></span>
 <label class="d-flex align-items-center gap-1 f11 dim"><input type="checkbox" class="m-0 snapbox"><span class="snaptext">スナップ</span></label>
 <button class="ib tool ms-3" aria-label="スナップ拡張"><svg class="ic ic18"><use href="#snap1"/></svg></button><button class="ib tool mini on" aria-label="スナップ枠"><svg class="ic ic18"><use href="#snap2"/></svg></button>
 <span class="bar wsbar"></span>
 <nav class="wsnav d-flex align-items-center flex-grow-1">
  <a class="ws f11" href="#">デフォルト</a><a class="ws f11" href="#">レビュー</a><a class="hot f14 d-flex align-items-center" href="#">学習<svg class="ic ic12 ms-3"><use href="#ham"/></svg></a><a class="ws f14" href="#">小さい画面</a>
 </nav>
 <button class="ib tool" aria-label="その他"><svg class="ic ic16" viewBox="0 0 16 16"><path d="m2 3 5 5-5 5M8 3l5 5-5 5"/></svg></button>
 <span class="bar"></span>
 <button class="ib tool" aria-label="ワークスペース設定"><svg class="ic icset"><use href="#wsset"/></svg></button>
 <label class="field hsearch d-flex align-items-center"><svg class="ic icsrch me-2"><use href="#srch"/></svg><input class="f12" type="text" aria-label="ヘルプを検索" placeholder="ヘルプを検索"></label>
</div>
</header>

<main class="workarea">
<section class="pane d-flex flex-column">
 <div class="phead d-flex align-items-center f11"><span class="lite">プロジェクト</span><svg class="ic ic12 ms-3"><use href="#ham"/></svg></div>
 <div class="d-flex gap-2 pinfo">
  <div class="thumb"></div>
  <div class="text-nowrap"><div class="dim">apple.glb <span class="mx-1">▾</span> <span class="f14">1 回使用</span></div><div>1920 x 1080 (1.00)</div><div>▵ 0;00;30;00, 29.97 fps</div><div class="f14">数百万色＋ <span class="f12">(ストレート )</span></div><div class="f11">サブタイプ</div></div>
 </div>
 <label class="field psearch d-flex align-items-center"><svg class="ic icsrch"><use href="#srch"/></svg><svg class="drop" viewBox="0 0 8 5"><path d="M0 0h8L4 5z"/></svg><input type="text" aria-label="プロジェクトを検索"></label>
 <table class="ptable">
  <colgroup><col class="cw21"><col><col class="cw26"><col class="cw97"><col class="cw60"><col class="cw27"><col class="cw21"></colgroup>
  <thead><tr><th></th><th><span class="d-flex align-items-center justify-content-between pe-1">名前<svg width="16" height="8" viewBox="0 0 16 8"><path d="m0 8 8-8 8 8z" fill="#2d8ceb"/></svg></span></th><th class="sw"><svg class="ic ic16 d-block"><use href="#tag"/></svg></th><th>種類</th><th class="small13">サイズ</th><th colspan="2" class="small13">フレ ...</th></tr></thead>
  <tbody>
  <tr><td class="p-0 ps-1"><svg class="ic ic12"><use href="#chev"/></svg></td><td class="p-0"><span class="d-flex align-items-center lite gap-1 ps-1 ms-n1"><svg class="ic ic18"><use href="#fold"/></svg>apple</span></td><td class="sw"><span class="swatch yel d-block"></span></td><td>フォルダー</td><td></td><td></td><td class="p-0"><svg class="ic ic16 d-block"><use href="#tree"/></svg></td></tr>
  <tr class="sel"><td></td><td class="p-0"><span class="d-flex align-items-center nm"><svg class="ic icfile"><use href="#file3d"/></svg><span class="pick flex-grow-1 ps-1">apple.glb</span></span></td><td class="sw"><span class="swatch mint d-block"></span></td><td>3D モデル</td><td></td><td class="ps-1">29.</td><td></td></tr>
  <tr><td></td><td class="p-0"><span class="d-flex align-items-center lite"><svg class="ic icsrch me-1"><use href="#comp"/></svg>コンポ 1</span></td><td class="sw"><span class="swatch tan d-block"></span></td><td>...ション</td><td></td><td class="ps-1">29.</td><td></td></tr>
  </tbody>
 </table>
 <div class="pfoot mt-auto d-flex align-items-center">
  <button class="ib pbtn" aria-label="解釈"><svg class="ic icw"><use href="#interp"/></svg></button><button class="ib pbtn" aria-label="フォルダー"><svg class="ic ic18"><use href="#fold"/></svg></button><button class="ib pbtn" aria-label="コンポ"><svg class="ic icw"><use href="#comp"/></svg></button><button class="ib pbtn" aria-label="調整"><svg class="ic ic16"><use href="#rocket"/></svg></button>
  <button class="ib field bpc">8 bpc</button><button class="ib pbtn" aria-label="削除"><svg class="ic ic18"><use href="#trash"/></svg></button><span class="pill"></span>
 </div>
</section>

<section class="pane viewer d-flex flex-column">
 <div class="phead inner d-flex align-items-center f11"><span class="dim f13">×</span><span class="swatch tan ms-2"></span><svg class="ic ic16 vlock"><use href="#unlock"/></svg><span class="lite">コンポジション</span><span class="hot f12 ms-1">コンポ 1</span><svg class="ic ic12 ms-2"><use href="#ham"/></svg></div>
 <div class="vtabs"><button class="ib ctab hot">コンポ 1</button></div>
 <div class="stage">
  <div class="cam">アクティブカメラ (デフォルト)</div>
  <svg class="gizmo" viewBox="0 0 840 570" fill="none">
   <path d="M126 92H474V488H126z" stroke="#a8cec6" stroke-width="4" stroke-dasharray="3 3"/>
   <path d="M126 160V92H194M404 92H474V160M474 416V488M126 416V488H200" stroke="#a8cec6" stroke-width="6"/>
   <path d="M114 78h27v27h-27zM462 78h27v27h-27zM114 276h27v27h-27zM462 276h27v27h-27zM114 474h27v27h-27zM462 474h27v27h-27z" fill="#a8cec6"/>
   <path d="M302 208C460 208 582 330 582 480" stroke="#2b2bd8" stroke-width="13"/>
   <path d="M302 115v80" stroke="#1fb000" stroke-width="14"/><path d="m301 62 24 55h-48z" fill="#bfff80"/>
   <path d="M283 190h37v37h-37z" fill="#bfff80"/><path d="M302 208V480" stroke="#dc2b2b" stroke-width="14" stroke-linecap="round"/>
   <circle cx="301" cy="287" r="28" fill="#ff8080"/>
   <path d="M600 490h80" stroke="#dc2b2b" stroke-width="14"/><path d="m730 490-55-24v48z" fill="#ff8080"/><path d="M564 472h37v37h-37z" fill="#ff8080"/>
   <path d="M320 490h262" stroke="#1fb000" stroke-width="14" stroke-linecap="round"/>
   <circle cx="506" cy="490" r="28" fill="#bfff80"/><circle cx="500" cy="291" r="28" fill="#8080ff"/>
   <path d="M266 490h70M300 462v62" stroke="#ccc" stroke-width="5"/><circle cx="301" cy="490" r="25" fill="#8080ff" stroke="#bbc" stroke-width="4"/>
  </svg>
  <svg class="axes" viewBox="0 0 80 80" fill="none"><path d="M16 62V26" stroke="#1fb000" stroke-width="2"/><path d="m16 15 5 18H11z" fill="#1fb000"/><path d="M16 62h30" stroke="#c33" stroke-width="1.500"/><path d="m63 62-18-4v8z" fill="#e33"/><circle cx="16" cy="62" r="4" fill="#2b2bd8"/><g font-family="Liberation Sans" font-size="12"><text x="3" y="12" fill="#1fb000">Y</text><text x="66" y="75" fill="#e33">X</text><text x="22" y="57" fill="#3a3ae0">Z</text></g></svg>
 </div>
 <div class="vfoot d-flex align-items-center">
  <span class="selbox"><select class="fsel zoomsel" aria-label="拡大率"><option>100 %</option></select><svg class="ic ic10"><use href="#chev"/></svg></span><span class="bar mx-1"></span>
  <span class="selbox ms-1"><select class="fsel ressel" aria-label="解像度"><option>(フル画質)</option></select><svg class="ic ic10"><use href="#chev"/></svg></span><span class="bar mx-1"></span>
  <button class="ib vb on ms-1" aria-label="高速プレビュー"><svg class="ic ic18"><use href="#flash"/></svg></button><button class="ib vb" aria-label="透明"><svg class="ic ic18"><use href="#check"/></svg></button><button class="ib vb on hot" aria-label="マスク"><svg class="ic ic18"><use href="#mask"/></svg></button><button class="ib vb" aria-label="関心領域"><svg class="ic ic18"><use href="#roi"/></svg></button><button class="ib vb" aria-label="ガイド"><svg class="ic ic18"><use href="#guide"/></svg></button><span class="bar mx-2"></span>
  <button class="ib vb" aria-label="チャンネル"><svg class="ic ic18"><use href="#rgb"/></svg></button><button class="ib vb" aria-label="露出"><svg class="ic ic16"><use href="#aper"/></svg></button><button class="ib hot exp">+0.0</button><span class="bar"></span>
  <button class="ib vb" aria-label="撮影"><svg class="ic ic18"><use href="#cam"/></svg></button><button class="ib vb off" aria-label="表示"><svg class="ic ic18"><use href="#snapsh"/></svg></button><span class="bar mx-1"></span>
  <button class="ib field tcb">0;00;00;00</button><span class="bar mx-1"></span>
  <button class="ib field draft off"><svg class="ic ic16 me-1"><use href="#cube"/></svg>ドラフト 3D</button><span class="bar mx-1"></span>
  <button class="ib vb offb" aria-label="グリッド"><svg class="ic ic18"><use href="#grid3"/></svg></button><button class="ib vb offb" aria-label="範囲"><svg class="ic ic18"><use href="#roi"/></svg></button><span class="bar mx-1"></span>
  <button class="ib field qbox f13">ク</button>
 </div>
</section>

<section class="pane d-flex flex-column">
 <div class="phead inner d-flex align-items-center lite"><span class="f12">プロパティ:</span>&nbsp;apple.glb<svg class="ic ic12 ms-3"><use href="#ham"/></svg></div>
 <div class="prow"><span class="wide fw-bold f12 dim">レイヤートランスフォーム</span><a href="#" class="hot f11">リセット</a></div>
 <div class="prow"><svg class="ic watch"><use href="#watch"/></svg><span class="dim f11">アンカーポイント</span><i></i><span class="val"><input value="0" aria-label="アンカーX"></span><span class="val"><input value="0" aria-label="アンカーY"></span><span class="val"><input value="0" aria-label="アンカーZ"></span></div>
 <div class="prow"><svg class="ic watch"><use href="#watch"/></svg><span class="dim f14">位置</span><i></i><span class="val"><input class="n3" value="960" aria-label="位置X"></span><span class="val"><input class="n3" value="540" aria-label="位置Y"></span><span class="val"><input value="0" aria-label="位置Z"></span></div>
 <div class="prow"><svg class="ic watch"><use href="#watch"/></svg><span class="dim f12">スケール</span><svg class="ic hot iclink"><use href="#link"/></svg><span class="val"><input class="n3" value="100" aria-label="スケールX">%</span><span class="val"><input class="n3" value="100" aria-label="スケールY">%</span><span class="val"><input class="n3" value="100" aria-label="スケールZ">%</span></div>
 <div class="prow"><svg class="ic watch"><use href="#watch"/></svg><span class="dim f14">方向</span><i></i><span class="val"><input value="0" aria-label="方向X">°</span><span class="val"><input value="0" aria-label="方向Y">°</span><span class="val"><input value="0" aria-label="方向Z">°</span></div>
 <div class="prow"><svg class="ic watch"><use href="#watch"/></svg><span class="dim f14">X 回転</span><i></i><span class="val rot"><input value="0" aria-label="X回転数">x<input class="n2" value="+0" aria-label="X角度">°</span></div>
 <div class="prow"><svg class="ic watch"><use href="#watch"/></svg><span class="dim f14">Y 回転</span><i></i><span class="val rot"><input value="0" aria-label="Y回転数">x<input class="n2" value="+0" aria-label="Y角度">°</span></div>
 <div class="prow"><svg class="ic watch"><use href="#watch"/></svg><span class="dim f14">Z 回転</span><i></i><span class="val rot"><input value="0" aria-label="Z回転数">x<input class="n2" value="+0" aria-label="Z角度">°</span></div>
 <div class="prow"><svg class="ic watch"><use href="#watch"/></svg><span class="dim f14">不透明度</span><i></i><span class="val"><input class="n3" value="100" aria-label="不透明度">%</span></div>
</section>

<section class="pane" style="grid-row:1/3;grid-column:4">
 <div class="phead d-flex align-items-center lite f14">整列<svg class="ic ic12 ms-3"><use href="#ham"/></svg></div>
 <div class="px-2">
 <div class="d-flex align-items-center justify-content-between alrow"><label for="alignto" class="dim f13 text-nowrap">レイヤーを整列 :</label><span class="selbox"><select id="alignto" class="fsel f12 alignsel"><option>コンポジション</option></select><svg class="ic ic10"><use href="#chev"/></svg></span></div>
 <div class="algrid"><button class="ib albtn" aria-label="左"><svg class="ic ic24"><use href="#alL"/></svg></button><button class="ib albtn" aria-label="水平中央"><svg class="ic ic24"><use href="#alC"/></svg></button><button class="ib albtn" aria-label="右"><svg class="ic ic24 flipx"><use href="#alL"/></svg></button><button class="ib albtn" aria-label="上"><svg class="ic ic24"><use href="#alT"/></svg></button><button class="ib albtn" aria-label="垂直中央"><svg class="ic ic24 unturn"><use href="#alC"/></svg></button><button class="ib albtn" aria-label="下"><svg class="ic ic24 flipy"><use href="#alT"/></svg></button></div>
 <div class="alsep"></div>
 <div class="dim f13 distlabel">レイヤーを配置 :</div>
 <div class="algrid dis"><svg class="ic ic24"><use href="#dT"/></svg><svg class="ic ic24"><use href="#dC"/></svg><svg class="ic ic24 flipy"><use href="#dT"/></svg><svg class="ic ic24 unturn"><use href="#dT"/></svg><svg class="ic ic24 unturn"><use href="#dC"/></svg><svg class="ic ic24 turn"><use href="#dT"/></svg></div>
 </div>
</section>

<section class="pane tl d-flex flex-column">
 <div class="d-flex flex-grow-1">
 <div class="tlleft">
  <div class="phead inner tlhead d-flex align-items-center"><span class="dim f13">×</span><span class="swatch tan ms-2"></span><span class="lite f12 ms-2 ps-1">コンポ 1</span><svg class="ic ic12 ms-2"><use href="#ham"/></svg></div>
  <div class="d-flex align-items-center tltop"><div class="text-center tcw"><div class="timecode">0;00;00;00</div><div class="f13 sub">00000 (29.97 fps)</div></div>
   <label class="field tlsearch d-flex align-items-center"><svg class="ic icsrch"><use href="#srch"/></svg><svg class="drop" viewBox="0 0 8 5"><path d="M0 0h8L4 5z"/></svg><input type="text" aria-label="レイヤーを検索"></label>
   <button class="ib tlb first" aria-label="フロー"><svg class="ic"><use href="#flow"/></svg></button><button class="ib tlb" aria-label="シャイ"><svg class="ic"><use href="#shy"/></svg></button><button class="ib tlb" aria-label="フレームブレンド"><svg class="ic"><use href="#film"/></svg></button><button class="ib tlb" aria-label="モーションブラー"><svg class="ic"><use href="#blur"/></svg></button><button class="ib tlb last" aria-label="グラフ"><svg class="ic"><use href="#graph"/></svg></button>
  </div>
  <div class="trow heads">
   <div class="avcol"><span class="cell"><svg class="ic ic16"><use href="#eye"/></svg></span><span class="cell"><svg class="ic ic16"><use href="#spk"/></svg></span><span class="cell"><svg class="ic ic16"><use href="#dot"/></svg></span><span class="cell"><svg class="ic ic16"><use href="#lock"/></svg></span></div>
   <div class="justify-content-center"><svg class="ic ic16 ms-2"><use href="#tag"/></svg></div><div class="ps-2 f12">#</div><div class="ps-2 f14">ソース名</div>
   <div class="swcol"><span class="cell"><svg class="ic ic16"><use href="#shy"/></svg></span><span class="cell"><svg class="ic ic16"><use href="#sun"/></svg></span><span class="cell"><svg class="ic ic16"><use href="#qual"/></svg></span><span class="cell fst-italic f16 fxs">fx</span><span class="cell"><svg class="ic ic16"><use href="#film"/></svg></span><span class="cell"><svg class="ic ic16"><use href="#blur"/></svg></span><span class="cell"><svg class="ic ic16"><use href="#half"/></svg></span><span class="cell"><svg class="ic ic16"><use href="#cube"/></svg></span></div>
   <div class="ps-2 f12">親とリンク</div><div></div>
  </div>
  <div class="trow layer">
   <div class="avcol"><span class="cell k"><svg class="ic ic16"><use href="#eye"/></svg></span><span class="cell"></span><span class="cell k"></span><span class="cell k"></span></div>
   <div class="justify-content-end"><svg class="ic ic10 me-2 unturn"><use href="#chev"/></svg><span class="lsw mint"></span></div><div class="ps-1 f13 lite">1</div>
   <div class="srccol"><svg class="ic icfile"><use href="#file3d"/></svg><span class="pick flex-grow-1 ps-1 f13">apple.glb</span></div>
   <div class="swcol"><span class="cell k"><svg class="ic ic16"><use href="#shy"/></svg></span><span class="cell k dim"><svg class="ic ic16"><use href="#sun"/></svg></span><span class="cell"></span><span class="cell"></span><span class="cell k"></span><span class="cell k"></span><span class="cell"></span><span class="cell k"><svg class="ic ic16"><use href="#cube"/></svg></span></div>
   <div class="ps-1"><svg class="ic ic16 mx-1"><use href="#spiral"/></svg><span class="selbox"><select class="fsel f13 psel" aria-label="親"><option>なし</option></select><svg class="ic ic10"><use href="#chev"/></svg></span></div><div></div>
  </div>
 </div>
 <div class="tracks d-flex flex-column">
  <div class="rowbars nav1"><span class="hnd l"></span><span class="mid"></span><span class="hnd r"></span></div>
  <div class="ruler"><div class="in">
   <span class="tick s" style="left:0%">0:00f</span><span class="tick" style="left:11.1%">10f</span><span class="tick" style="left:22.2%">20f</span><span class="tick s" style="left:33.3%">01:00f</span><span class="tick" style="left:44.4%">10f</span><span class="tick" style="left:55.5%">20f</span><span class="tick s" style="left:66.6%">02:00f</span><span class="tick" style="left:77.7%">10f</span><span class="tick" style="left:88.8%">20f</span><span class="tick s" style="left:99.9%">03:00f</span></div></div>
  <div class="rowbars nav2"><span class="hnd l"></span><span class="mid"></span><span class="hnd r"></span></div>
  <div class="cache"><i></i></div>
  <div class="cliprow"><div class="clip"></div></div>
  <div class="void"></div>
  <div class="playhead"><svg width="14" height="18" viewBox="0 0 14 18" class="d-block"><path d="M0 0h14v9l-7 9-7-9z" fill="#2d8ceb"/><path d="M4 8h6M7 8v9" stroke="#1a4a7a"/></svg></div>
 </div>
 <div class="gutter text-center"><svg width="14" height="18" class="d-block mx-auto mb-2"><use href="#marker"/></svg><svg class="ic ic18"><use href="#shot"/></svg></div>
 </div>
 <div class="tfoot d-flex align-items-center">
  <button class="ib tfb hot" aria-label="スイッチ"><svg class="ic ic16"><use href="#lays"/></svg></button><button class="ib tfb" aria-label="転送"><svg class="ic ic16"><use href="#circs"/></svg></button><button class="ib tfb" aria-label="時間"><svg class="ic ic16"><use href="#brace"/></svg></button><button class="ib tfb" aria-label="レンダリング"><svg class="ic ic16"><use href="#snail"/></svg></button>
  <span class="rt"><span class="f12 lite">フレームレンダリング時間</span>&nbsp; <span class="ms">0ms</span></span>
  <button class="ib field swm f12">スイッチ / モード</button>
  <svg class="ic mt1"><use href="#mtns"/></svg><input type="range" class="zoomer" value="0" aria-label="ズーム"><svg class="ic mt2"><use href="#mtn"/></svg>
 </div>
</section>
</main>

<footer class="taskbar d-flex flex-shrink-0">
 <button class="ib start" aria-label="スタート"><svg width="22" height="20" viewBox="0 0 22 20"><path d="m0 3 9-1.300V9.500H0zM10 1.500 22 0v9.500H10zM0 10.500h9v7.800L0 17zM10 10.500h12V20l-12-1.500z" fill="#fff"/></svg></button>
 <label class="tsearch d-flex align-items-center"><svg class="ic glass" viewBox="0 0 20 20"><circle cx="12.500" cy="7" r="6"/><path d="m8 12-7 7"/></svg><input type="text" aria-label="検索" placeholder="ここに入力して検索">
  <svg width="100" height="35" viewBox="0 0 100 35" class="align-self-end"><path d="M28 16 50 9 62 4l14-4 8 4 8-2 8 3v20H28z" fill="#3f7287"/><path d="M2 35c2-18 18-19 35-20 18-8 40-12 63-4v24z" fill="#7c9a1c"/><path d="M40 13c20-8 40-6 60 0v4c-18-6-38-6-60-4" fill="#3d5d16"/><path d="M8 26c6-6 16-4 22-1 12 6 22 2 34-4l36-4v6c-16-2-30 2-40 7-16 6-36 4-52-4" fill="#4f6d12"/><path d="M5 31c8-8 20-5 30-4 18 1 30-8 65-8v4c-22 0-36 12-58 12H5z" fill="#58e0f0"/><path d="M14 35c12-8 24-2 34-3 16-4 26-8 52-6v9z" fill="#6d8c18"/><path d="M4 29c14-8 24-2 36-5 18-4 28-10 60-9" stroke="#e6e9a4" fill="none" stroke-width="1.500"/><path d="M70 35c4-8 20-7 30-6v3c-10-1-16 0-18 3z" fill="#6fe6f6"/></svg></label>
 <div class="d-flex apps">
 <button class="ib app run" aria-label="Chrome"><svg width="30" height="30" viewBox="0 0 30 30"><circle cx="15" cy="15" r="15" fill="#fbc116"/><path d="M15 15 2 7.500A15 15 0 0 1 28 7.500H15z" fill="#e33b2e"/><path d="M2 7.500A15 15 0 0 0 14 30l7-11.500-6-3.500-6.500 3.500z" fill="#2da94f"/><circle cx="15" cy="15" r="7.500" fill="#fff"/><circle cx="15" cy="15" r="5.800" fill="#2a74e8"/></svg></button>
 <button class="ib app" aria-label="Outlook"><svg width="30" height="28" viewBox="0 0 30 28"><path d="M9 0h18v14H9z" fill="#28a8ea"/><path d="M9 0h9v9H9z" fill="#0f6cbd"/><path d="M18 7h9v8h-9z" fill="#50d9ff"/><path d="M6 14l12 6 12-6v14H8z" fill="#1490df"/><path d="m6 26 24-12v14H8z" fill="#1a6fc4"/><rect y="6" width="16" height="16" rx="1.500" fill="#0f5fb5"/><text x="3" y="19" font-family="Open Sans" font-weight="700" font-size="13" fill="#fff">O</text></svg></button>
 <button class="ib app run" aria-label="エクスプローラー"><svg width="28" height="25" viewBox="0 0 28 25"><path d="M0 1h10l3 3h14v20H0z" fill="#e8a820"/><path d="M0 6h28v18H0z" fill="#ffd868"/><path d="M5 25V15q0-2 2-2h14q2 0 2 2v10h-5v-6h-8v6z" fill="#3c93d0"/></svg></button>
 <button class="ib app" aria-label="iTunes"><svg width="28" height="28" viewBox="0 0 28 28"><circle cx="14" cy="14" r="13" fill="#fff" stroke="#dba7e8" stroke-width="2"/><path d="M11 20V9l8-2v11" stroke="#c94be0" stroke-width="2.500" fill="none"/><circle cx="9" cy="20" r="3" fill="#5b7af0"/><circle cx="17" cy="18.500" r="3" fill="#f04a8a"/></svg></button>
 <button class="ib app" aria-label="設定"><svg width="24" height="24" viewBox="0 0 24 24" fill="none" stroke="#fff"><circle cx="12" cy="12" r="7" stroke-width="3"/><circle cx="12" cy="12" r="10" stroke-width="4" stroke-dasharray="3.850 4"/></svg></button>
 <button class="ib app run" aria-label="文書"><svg width="22" height="24" viewBox="0 0 24 26"><path d="M1 2l13-2v22l-12 1z" fill="#fff"/><path d="m5 4 15-1v20l-14 3z" fill="#e8e4ee" stroke="#888"/><path d="M8 9h8M8 13h8M8 17h6" stroke="#aab"/><path d="m20 7-7 13" stroke="#433" stroke-width="2"/><path d="m18 7 4-3 1 3-4 4z" fill="#e8842a"/></svg></button>
 <button class="ib app run cur" aria-label="After Effects"><span class="aebig">Ae</span></button>
 </div>
 <div class="d-flex ms-auto">
 <button class="ib tray" aria-label="隠れているアイコン"><svg class="ic ic16" viewBox="0 0 16 16"><path d="m0 12 8-8 8 8" stroke-width="1.500"/></svg></button>
 <button class="ib tray" aria-label="会議"><svg class="ic ic16" viewBox="0 0 16 16"><path d="M2 4h8v8H2zM10 7l4-3v8l-4-3M3 1c3-2 7-2 10 0M3 15c3 2 7 2 10 0" stroke-width="1.300"/></svg></button>
 <button class="ib tray" aria-label="OneDrive"><svg width="20" height="18" viewBox="0 0 20 18"><path d="M4 13a4 4 0 0 1 0-8 6 6 0 0 1 11-1 5 5 0 0 1 0 9z" fill="#b9bec6"/><circle cx="14.500" cy="12" r="5" fill="#2b7fd0" stroke="#fff"/><path d="M11.500 12a3 3 0 0 1 5-2M17.500 12a3 3 0 0 1-5 2" stroke="#fff" fill="none" stroke-width="1.400"/></svg></button>
 <button class="ib tray" aria-label="電源"><svg width="20" height="16" viewBox="0 0 20 16" fill="none" stroke="#fff"><path d="M4 4h14v9H4zM19 6v5M1 0v3h4V0M3 3v6" stroke-width="1.300"/><path d="M7 6h9v5H7z" fill="#fff"/></svg></button>
 <button class="ib tray" aria-label="Wi-Fi"><svg width="16" height="16" viewBox="0 0 16 16" fill="none" stroke="#ddd"><path d="M1 15C1 7 7 1 15 1M5 15C5 9 9 5 15 5M9 15c0-3 3-6 6-6" stroke-width="1.300"/><circle cx="14" cy="14" r="1.500" fill="#fff"/></svg></button>
 <button class="ib tray narrow" aria-label="音量"><svg width="19" height="14" viewBox="0 0 19 14" fill="none" stroke="#fff" stroke-width="1.300"><path d="M1 4h3l4-3v12l-4-3H1zM11 4l6 6M17 4l-6 6"/></svg></button>
 <button class="ib tray" aria-label="IME停止"><svg width="20" height="18" viewBox="0 0 20 18"><path d="M9 1h4l5 16h-4z" fill="#999"/><path d="m9 4-5 12h2l5-9z" fill="#777"/><circle cx="5" cy="13" r="5" fill="#000"/><path d="m3 11 4 4M7 11l-4 4" stroke="#fff" stroke-width="1.600"/></svg></button>
 <button class="ib tray ime" aria-label="IME"><svg width="19" height="19" viewBox="0 0 19 19"><path d="M0 0h19v19H0z" fill="#fff"/><path d="M8 2h4l5 15h-4z"/><path d="M8 4 3 15h2l5-7z"/></svg></button>
 <div class="clock align-self-center"><div>10:02</div><div>2024/02/02</div></div>
 <button class="ib note" aria-label="通知"><svg width="32" height="32" viewBox="0 0 32 32"><path d="M2 3h20v15H11l-4 4v-4H2z" fill="#fff"/><path d="M6 7h12M6 10.500h12M6 14h8" stroke="#1c2542" stroke-width="1.500"/><circle cx="21" cy="21" r="9.500" fill="#333b46" stroke="#aaa"/><text x="17" y="26" font-family="Open Sans" font-size="14" fill="#fff">4</text></svg></button>
 </div>
</footer>
</body>
</html>
